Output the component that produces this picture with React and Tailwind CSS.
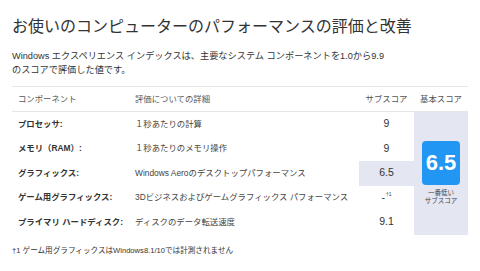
import React from "react";

const rows = [
  { label: "プロセッサ:", detail: "１秒あたりの計算", score: "9" },
  { label: "メモリ（RAM）:", detail: "１秒あたりのメモリ操作", score: "9" },
  { label: "グラフィックス:", detail: "Windows Aeroのデスクトップパフォーマンス", score: "6.5", low: true },
  { label: "ゲーム用グラフィックス:", detail: "3Dビジネスおよびゲームグラフィックス パフォーマンス", score: "-", note: true },
  { label: "プライマリ ハードディスク:", detail: "ディスクのデータ転送速度", score: "9.1" },
];

const App = () => {
  return (
    <div className="w-[480px] h-[271px] bg-white px-[12px] pt-[17px] font-['Liberation_Sans','Noto_Sans_CJK_JP',sans-serif] text-[#333]">
      <h1 className="text-[16px] leading-[20px] font-normal text-[#333]">
        お使いのコンピューターのパフォーマンスの評価と改善
      </h1>

      <p className="mt-[11.5px] text-[9.2px] leading-[14px] text-[#333]">
        Windows エクスペリエンス インデックスは、主要なシステム コンポーネントを1.0から9.9
        <br />
        のスコアで評価した値です。
      </p>

      <div className="mt-[9.5px] grid grid-cols-[123px_224px_55px_54px] grid-rows-[25px_repeat(5,24.5px)] border-t border-[#e6e6e6] text-[8.4px]">
        {/* header */}
        <div className="flex items-center pl-[6px] border-b border-[#e6e6e6] text-[#555]">コンポーネント</div>
        <div className="flex items-center border-b border-[#e6e6e6] text-[#555]">評価についての詳細</div>
        <div className="flex items-center justify-center border-b border-[#e6e6e6] text-[#555]">サブスコア</div>
        <div className="flex items-center justify-center border-b border-[#e6e6e6] text-[#555]">基本スコア</div>

        {rows.map((r, i) => (
          <React.Fragment key={r.label}>
            <div
              className="flex items-center pl-[6px] font-bold text-[#333]"
              style={{ gridRow: i + 2, gridColumn: 1 }}
            >
              {r.label}
            </div>
            <div
              className="flex items-center text-[#444]"
              style={{ gridRow: i + 2, gridColumn: 2 }}
            >
              {r.detail}
            </div>
            <div
              className={`flex items-center justify-center text-[10.5px] text-[#333] ${r.low ? "bg-[#e4e6f2]" : ""}`}
              style={{ gridRow: i + 2, gridColumn: 3 }}
            >
              {r.score}
              {r.note && <sup className="text-[5px] ml-[1px] -mt-[3px]">†1</sup>}
            </div>
          </React.Fragment>
        ))}

        <div className="col-start-4 row-start-2 row-span-5 bg-[#e4e6f2] flex flex-col items-center justify-center">
          <div className="w-[38px] h-[44px] rounded-[4px] bg-[#2196f3] flex items-center justify-center text-white font-bold text-[22px] leading-none">
            6.5
          </div>
          <div className="mt-[4px] text-[6.5px] leading-[8px] text-[#444] text-center">
            一番低い
            <br />
            サブスコア
          </div>
        </div>
      </div>

      <p className="mt-[11.5px] text-[7.6px] leading-[10px] text-[#333]">
        †1 ゲーム用グラフィックスはWindows8.1/10では計測されません
      </p>
    </div>
  );
};

export default App;
